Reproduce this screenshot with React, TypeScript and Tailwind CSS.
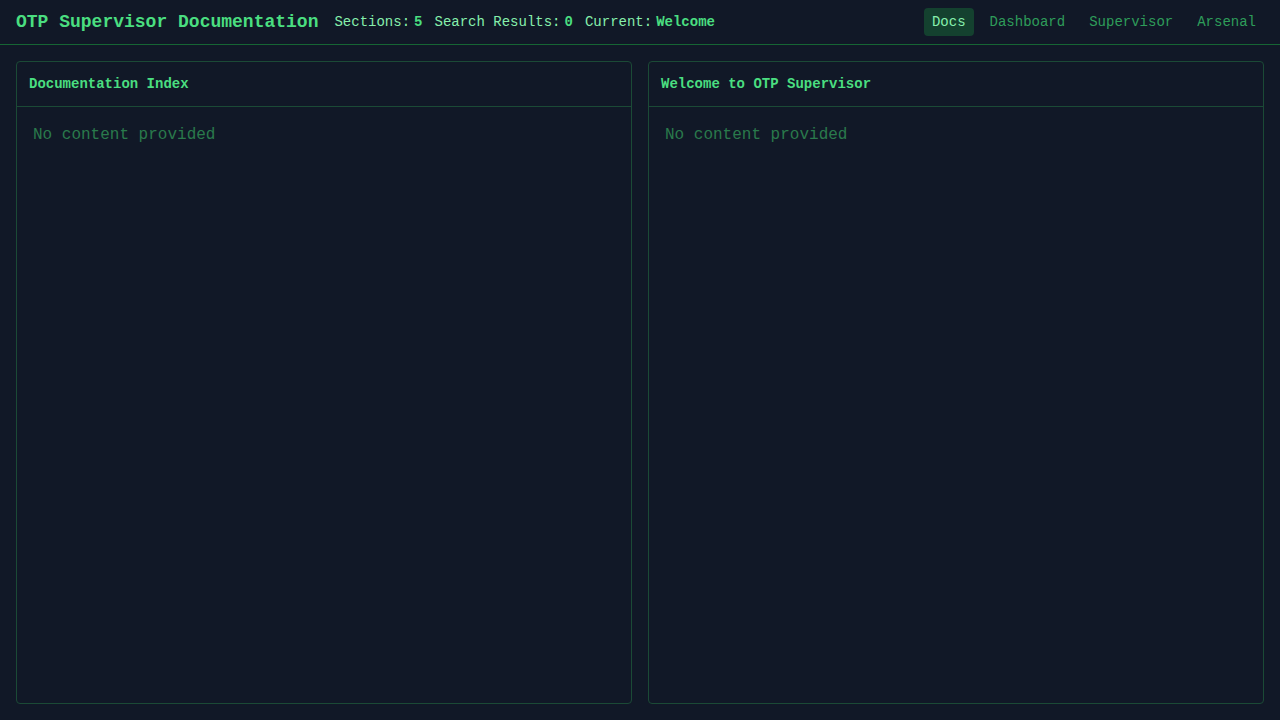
const mono = { fontFamily: '"Liberation Mono", "DejaVu Sans Mono", monospace' };

function Panel({ title }: { title: string }) {
  return (
    <div className="flex flex-1 flex-col rounded border border-[#1b4a36] bg-[#111827]">
      <div className="border-b border-[#1b4a36] px-3 py-3">
        <h2 className="text-sm font-bold leading-5 text-[#4ade80]">{title}</h2>
      </div>
      <div className="flex-1 p-4">
        <p className="text-base leading-6 text-[#2a7a4c]">No content provided</p>
      </div>
    </div>
  );
}

export default function App() {
  const stats = [
    { label: "Sections:", value: "5" },
    { label: "Search Results:", value: "0" },
    { label: "Current:", value: "Welcome" },
  ];
  const links = ["Docs", "Dashboard", "Supervisor", "Arsenal"];

  return (
    <div className="flex h-screen flex-col bg-[#111827]" style={mono}>
      <header className="flex items-center justify-between border-b border-[#166534] px-4 py-2">
        <div className="flex items-center gap-4">
          <h1 className="text-lg font-bold leading-7 text-[#4ade80]">OTP Supervisor Documentation</h1>
          <div className="flex items-center gap-3 text-sm">
            {stats.map((s) => (
              <span key={s.label} className="flex items-center gap-1">
                <span className="text-[#86efac]">{s.label}</span>
                <span className="font-bold text-[#4ade80]">{s.value}</span>
              </span>
            ))}
          </div>
        </div>
        <nav className="flex items-center gap-2">
          {links.map((l, i) => (
            <a
              key={l}
              className={
                i === 0
                  ? "rounded bg-[#14412f] px-2 py-1 text-sm leading-5 text-[#86efac]"
                  : "rounded px-2 py-1 text-sm leading-5 text-[#2e9d5a]"
              }
            >
              {l}
            </a>
          ))}
        </nav>
      </header>
      <main className="flex flex-1 gap-4 p-4">
        <Panel title="Documentation Index" />
        <Panel title="Welcome to OTP Supervisor" />
      </main>
    </div>
  );
}
